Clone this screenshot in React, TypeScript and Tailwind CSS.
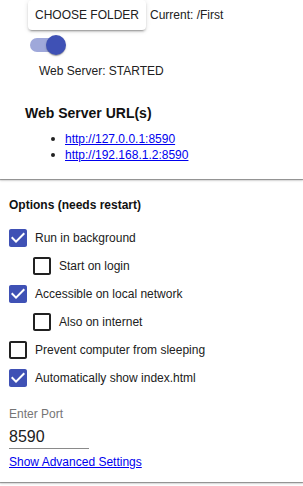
import React from "react";

const font = { fontFamily: '"Liberation Sans", Arial, sans-serif' };

function Check({ checked }: { checked: boolean }) {
  return checked ? (
    <svg viewBox="3 3 18 18" width="18" height="18" className="shrink-0">
      <path
        fill="#3f51b5"
        d="M19 3H5c-1.11 0-2 .9-2 2v14c0 1.1.89 2 2 2h14c1.11 0 2-.9 2-2V5c0-1.1-.89-2-2-2zm-9 14l-5-5 1.41-1.41L10 14.17l7.59-7.59L19 8l-9 9z"
      />
    </svg>
  ) : (
    <svg viewBox="3 3 18 18" width="18" height="18" className="shrink-0">
      <path
        fill="#212121"
        d="M19 5v14H5V5h14m0-2H5c-1.1 0-2 .9-2 2v14c0 1.1.9 2 2 2h14c1.1 0 2-.9 2-2V5c0-1.1-.9-2-2-2z"
      />
    </svg>
  );
}

function Row({ label, checked, nested }: { label: string; checked: boolean; nested?: boolean }) {
  return (
    <div className={`flex h-[28px] items-center gap-[8px] ${nested ? "pl-[33px]" : "pl-[9px]"}`}>
      <Check checked={checked} />
      <span className="text-[12px] leading-[14px] text-[#212121]">{label}</span>
    </div>
  );
}

export default function App() {
  return (
    <div className="w-[303px] h-[486px] bg-white overflow-hidden" style={font}>
      <div className="relative z-10 h-[179px] bg-white shadow-[0_1px_1px_rgba(0,0,0,0.35),0_2px_2px_rgba(0,0,0,0.12)]">
        <div className="flex h-[30px] items-center">
          <div className="ml-[28px] flex h-[30px] items-center rounded-[4px] bg-white px-[7px] text-[12px] text-[#212121] shadow-[0_3px_1px_-2px_rgba(0,0,0,0.2),0_2px_2px_0_rgba(0,0,0,0.14),0_1px_5px_0_rgba(0,0,0,0.12)]">
            CHOOSE FOLDER
          </div>
          <span className="ml-[4px] text-[12px] text-[#212121]">Current: /First</span>
        </div>
        <div className="relative ml-[30px] mt-[5px] h-[20px] w-[36px]">
          <div className="absolute left-0 top-[3px] h-[14px] w-[34px] rounded-full bg-[#9fa8da]" />
          <div className="absolute left-[16px] top-0 h-[20px] w-[20px] rounded-full bg-[#3f51b5] shadow-[0_2px_1px_-1px_rgba(0,0,0,0.2),0_1px_1px_0_rgba(0,0,0,0.14),0_1px_3px_0_rgba(0,0,0,0.12)]" />
        </div>
        <div className="ml-[39px] mt-[9px] text-[12px] leading-[14px] text-[#212121]">Web Server: STARTED</div>
        <div className="ml-[25px] mt-[27px] text-[14px] font-bold leading-[16px] text-[#111]">Web Server URL(s)</div>
        <div className="mt-[10px]">
          {["http://127.0.0.1:8590", "http://192.168.1.2:8590"].map((u) => (
            <div key={u} className="flex h-[16px] items-center">
              <span className="ml-[51px] h-[4px] w-[4px] rounded-full bg-[#222]" />
              <a href="#" className="ml-[10px] text-[12px] leading-[16px] text-[#0000ee] underline">
                {u}
              </a>
            </div>
          ))}
        </div>
      </div>
      <div className="h-[303px] bg-white shadow-[0_1px_1px_rgba(0,0,0,0.35),0_2px_2px_rgba(0,0,0,0.12)]">
        <div className="pl-[9px] pt-[19px] text-[12px] font-bold leading-[14px] text-[#111]">Options (needs restart)</div>
        <div className="mt-[12px]">
          <Row label="Run in background" checked />
          <Row label="Start on login" checked={false} nested />
          <Row label="Accessible on local network" checked />
          <Row label="Also on internet" checked={false} nested />
          <Row label="Prevent computer from sleeping" checked={false} />
          <Row label="Automatically show index.html" checked />
        </div>
        <div className="ml-[9px] mt-[15px] text-[12px] leading-[14px] text-[#757575]">Enter Port</div>
        <div className="ml-[9px] mt-[6px] w-[80px] border-b border-[#8a8a8a] pb-[1px] text-[16px] leading-[20px] text-[#212121]">
          8590
        </div>
        <a href="#" className="ml-[9px] mt-[6px] block w-max text-[12px] leading-[14px] text-[#0000ee] underline">
          Show Advanced Settings
        </a>
      </div>
    </div>
  );
}
